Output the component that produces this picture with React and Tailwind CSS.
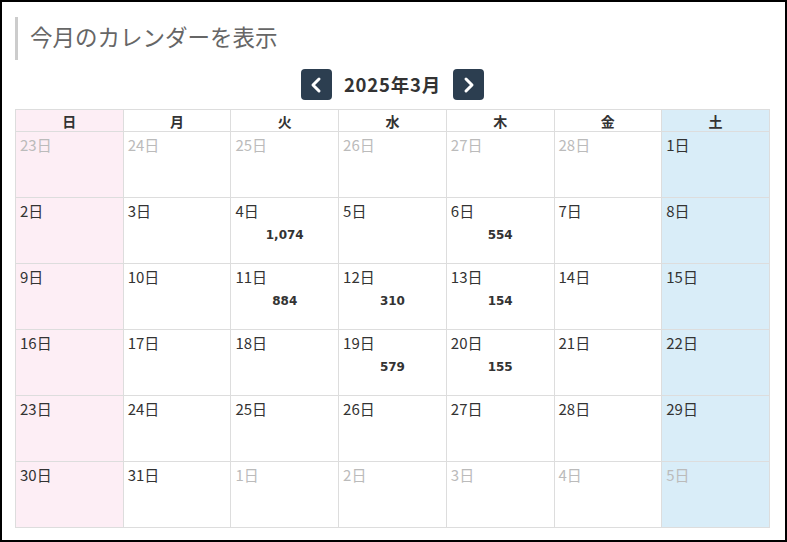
import { ChevronLeft, ChevronRight } from "lucide-react";

const weekdays = ["日", "月", "火", "水", "木", "金", "土"];

// each cell: [day, inMonth, count]
const weeks = [
  [[23, false], [24, false], [25, false], [26, false], [27, false], [28, false], [1, true]],
  [[2, true], [3, true], [4, true, "1,074"], [5, true], [6, true, "554"], [7, true], [8, true]],
  [[9, true], [10, true], [11, true, "884"], [12, true, "310"], [13, true, "154"], [14, true], [15, true]],
  [[16, true], [17, true], [18, true], [19, true, "579"], [20, true, "155"], [21, true], [22, true]],
  [[23, true], [24, true], [25, true], [26, true], [27, true], [28, true], [29, true]],
  [[30, true], [31, true], [1, false], [2, false], [3, false], [4, false], [5, false]],
];

function colBg(i) {
  if (i === 0) return "bg-[#fdeef5]";
  if (i === 6) return "bg-[#d9edf8]";
  return "bg-white";
}

export default function App() {
  return (
    <div
      className="w-[787px] h-[542px] border-2 border-black bg-white px-[13px] pt-[15px] text-[#333]"
      style={{ fontFamily: '"Noto Sans CJK JP", "Noto Sans", sans-serif' }}
    >
      {/* Title */}
      <h2 className="border-l-[3px] border-[#cccccc] pl-[12px] pb-[5px] h-[43px] flex items-center text-[22.5px] text-[#666] leading-none">
        今月のカレンダーを表示
      </h2>

      {/* Month nav */}
      <div className="flex items-center justify-center gap-[12px] mt-[9px] mr-[2px]">
        <button className="w-[31px] h-[31px] rounded-[4px] bg-[#2c3e50] text-white flex items-center justify-center">
          <ChevronLeft size={24} strokeWidth={3} />
        </button>
        <span className="text-[18.5px] font-bold text-[#333] leading-none tracking-[0.8px]">2025年3月</span>
        <button className="w-[31px] h-[31px] rounded-[4px] bg-[#2c3e50] text-white flex items-center justify-center">
          <ChevronRight size={24} strokeWidth={3} />
        </button>
      </div>

      {/* Calendar */}
      <table className="mt-[9px] w-[755px] table-fixed border-collapse">
        <thead>
          <tr>
            {weekdays.map((w, i) => (
              <th
                key={w}
                className={`h-[22px] border border-[#dddddd] text-[14px] font-bold leading-none text-[#333] ${colBg(i)}`}
              >
                {w}
              </th>
            ))}
          </tr>
        </thead>
        <tbody>
          {weeks.map((week, r) => (
            <tr key={r}>
              {week.map(([d, inMonth, count], i) => (
                <td
                  key={i}
                  className={`h-[66px] border border-[#dddddd] align-top px-[4px] pt-[3px] ${colBg(i)}`}
                >
                  <div
                    className={`text-[15px] leading-[20px] ${inMonth ? "text-[#333]" : "text-[#bbbbbb]"}`}
                  >
                    {d}日
                  </div>
                  {count && (
                    <div
                      className="text-center text-[12px] font-bold leading-none mt-[8px] text-[#333]"
                      style={{ fontFamily: '"DejaVu Sans", sans-serif' }}
                    >
                      {count}
                    </div>
                  )}
                </td>
              ))}
            </tr>
          ))}
        </tbody>
      </table>
    </div>
  );
}
